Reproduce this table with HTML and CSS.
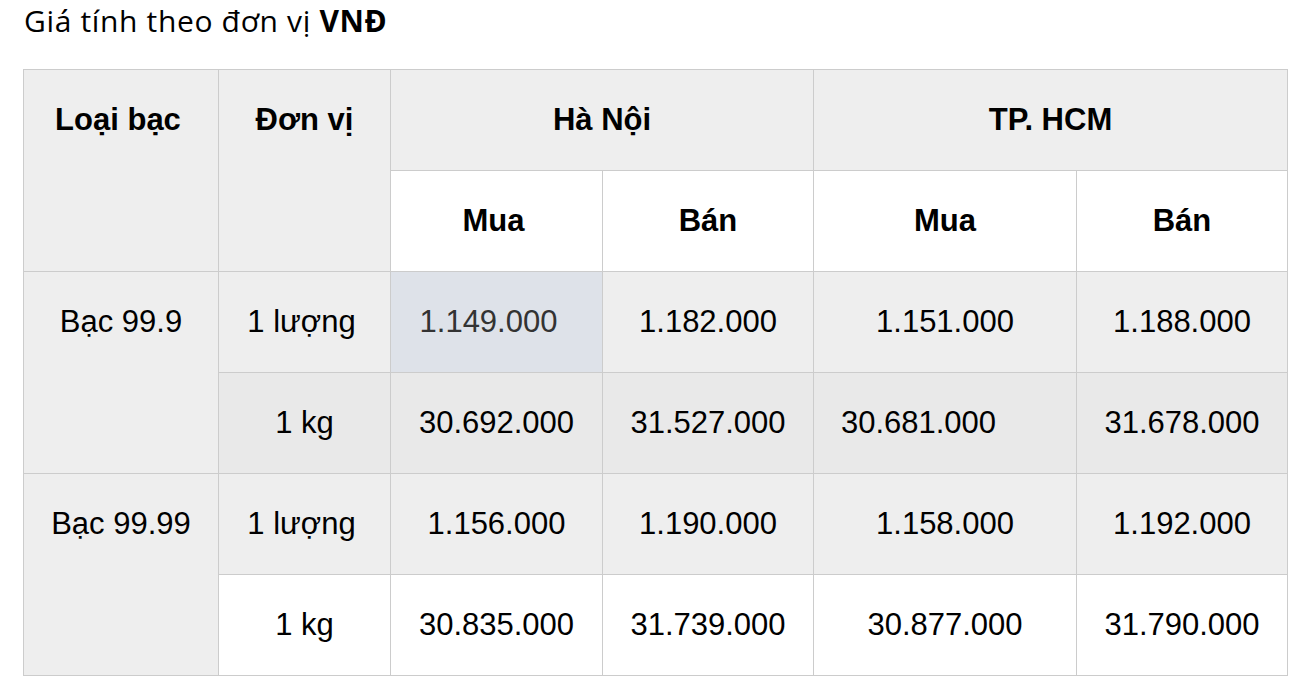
FILE: index.html
```html
<!DOCTYPE html>
<html lang="vi">
<head>
<meta charset="utf-8">
<title>Giá bạc</title>
<link rel="stylesheet" href="styles.css">
</head>
<body>
<div class="page">
  <p class="note">Giá tính theo đơn vị <strong>VNĐ</strong></p>
  <table class="price">
    <colgroup>
      <col class="c1"><col class="c2"><col class="c3"><col class="c4"><col class="c5"><col class="c6">
    </colgroup>
    <thead>
      <tr class="h1">
        <th rowspan="2">Loại bạc</th>
        <th rowspan="2">Đơn vị</th>
        <th colspan="2">Hà Nội</th>
        <th colspan="2">TP. HCM</th>
      </tr>
      <tr class="h2">
        <th>Mua</th><th>Bán</th><th>Mua</th><th>Bán</th>
      </tr>
    </thead>
    <tbody>
      <tr class="r1">
        <td rowspan="2" class="kind">Bạc 99.9</td>
        <td class="unit">1 lượng</td>
        <td class="hl">1.149.000</td>
        <td>1.182.000</td>
        <td>1.151.000</td>
        <td>1.188.000</td>
      </tr>
      <tr class="r2">
        <td>1 kg</td>
        <td>30.692.000</td>
        <td>31.527.000</td>
        <td class="shift">30.681.000</td>
        <td>31.678.000</td>
      </tr>
      <tr class="r3">
        <td rowspan="2" class="kind">Bạc 99.99</td>
        <td class="unit">1 lượng</td>
        <td>1.156.000</td>
        <td>1.190.000</td>
        <td>1.158.000</td>
        <td>1.192.000</td>
      </tr>
      <tr class="r4">
        <td>1 kg</td>
        <td>30.835.000</td>
        <td>31.739.000</td>
        <td>30.877.000</td>
        <td>31.790.000</td>
      </tr>
    </tbody>
  </table>
</div>
</body>
</html>
```
FILE: styles.css
```css
html, body {
  margin: 0;
  padding: 0;
  background: #fff;
}
.page {
  padding: 0 0 0 23px;
}
.note {
  margin: 0;
  padding: 2px 0 0 1px;
  height: 69px;
  box-sizing: border-box;
  font-family: "Open Sans", "Noto Sans", sans-serif;
  font-size: 30px;
  line-height: 38px;
  letter-spacing: 0.65px;
  color: #000;
}
.note strong {
  font-weight: 700;
}
.price {
  border-collapse: collapse;
  table-layout: fixed;
  width: 1265px;
  font-family: "Liberation Sans", Arial, sans-serif;
  font-size: 31px;
  color: #000;
}
.c1 { width: 195px; }
.c2 { width: 172px; }
.c3 { width: 212px; }
.c4 { width: 211px; }
.c5 { width: 263px; }
.c6 { width: 211px; }
.price th,
.price td {
  border: 1px solid #cccccc;
  padding: 32px 4px 32px;
  line-height: 36px;
  text-align: center;
  vertical-align: top;
  white-space: nowrap;
}
.price th {
  font-weight: 700;
  background: #eeeeee;
}
.price th:first-child {
  padding-right: 10px;
}
.price .h2 th {
  background: #ffffff;
}
.price .r1 td {
  background: #eeeeee;
}
.price .r2 td {
  background: #e9e9e9;
}
.price .r3 td {
  background: #eeeeee;
}
.price .r4 td {
  background: #ffffff;
}
.price td.kind {
  background: #eeeeee;
}
.price td.unit {
  padding-right: 10px;
}
.price td.hl {
  background: #dee2e9;
  color: #333;
  padding-right: 20px;
}
.price td.shift {
  padding-right: 57px;
}
```
